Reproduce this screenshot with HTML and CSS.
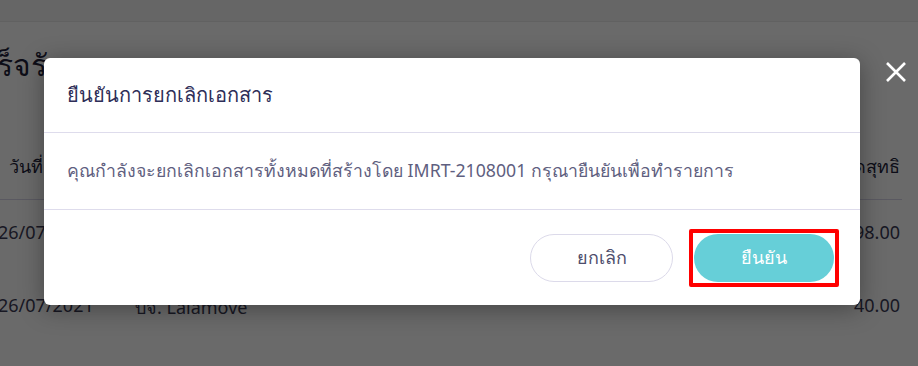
FILE: index.html
```html
<!DOCTYPE html>
<html lang="th">
<head>
<meta charset="utf-8">
<title>ยืนยันการยกเลิกเอกสาร</title>
<link rel="stylesheet" href="styles.css">
</head>
<body>
<div class="page">
  <div class="topbar"></div>
  <div class="content">
    <h1 class="page-title">รายการเสร็จรับ</h1>
    <div class="table">
      <div class="row head">
        <span class="c-date">วันที่</span>
        <span class="c-name">ผู้ขาย</span>
        <span class="c-amt">ยอดสุทธิ</span>
      </div>
      <div class="row">
        <span class="c-date">26/07/2021</span>
        <span class="c-name">บจ. Kerry</span>
        <span class="c-amt">98.00</span>
      </div>
      <div class="row">
        <span class="c-date">26/07/2021</span>
        <span class="c-name">บจ. Lalamove</span>
        <span class="c-amt">40.00</span>
      </div>
    </div>
  </div>
</div>

<div class="overlay">
  <div class="modal">
    <div class="modal-header">ยืนยันการยกเลิกเอกสาร</div>
    <div class="modal-body">คุณกำลังจะยกเลิกเอกสารทั้งหมดที่สร้างโดย IMRT-2108001 กรุณายืนยันเพื่อทำรายการ</div>
    <div class="modal-footer">
      <button class="btn btn-cancel">ยกเลิก</button>
      <span class="highlight"><button class="btn btn-confirm">ยืนยัน</button></span>
    </div>
  </div>
  <button class="close" aria-label="close">
    <svg width="22" height="20" viewBox="0 0 22 20"><path d="M2 1 L20 19 M20 1 L2 19" stroke="#fff" stroke-width="2.6" fill="none"/></svg>
  </button>
</div>
</body>
</html>
```
FILE: styles.css
```css
* { box-sizing: border-box; }
html, body { margin: 0; padding: 0; }
body {
  width: 918px;
  height: 366px;
  overflow: hidden;
  font-family: "Noto Sans", "Liberation Sans", sans-serif;
  background: #fcfcfc;
  position: relative;
}
.page { display: flex; flex-direction: column; }
.topbar { height: 22px; background: #f2f2f2; border-bottom: 1px solid #e6e6e6; }
.content { margin-left: -128px; width: 1030px; }
.page-title {
  margin: 0 0 0 -5px;
  padding-top: 20px;
  height: 108px;
  font-size: 30px;
  font-weight: 400;
  color: #1f1f3a;
}
.table { display: flex; flex-direction: column; }
.row {
  display: flex;
  align-items: flex-start;
  height: 73px;
  padding-top: 20px;
  font-size: 18px;
  color: #3a3a55;
}
.row.head { height: 70px; padding-top: 22px; border-bottom: 1px solid #d6d4e6; color: #1f1f3a; }
.row.head .c-date { padding-left: 137px; }
.c-date { width: 263px; padding-left: 126px; white-space: nowrap; }
.c-name { flex: 1; padding-left: 0; }
.c-amt { width: 200px; text-align: right; padding-right: 2px; }

.overlay {
  position: absolute;
  inset: 0;
  background: rgba(0, 0, 0, 0.58);
  display: flex;
  align-items: flex-start;
  padding: 58px 0 0 44px;
}
.modal {
  width: 816px;
  background: #fff;
  border-radius: 6px;
  box-shadow: 0 4px 24px rgba(0, 0, 0, 0.35);
  display: flex;
  flex-direction: column;
}
.modal-header {
  height: 75px;
  padding: 0 23px;
  display: flex;
  align-items: center;
  font-size: 20px;
  color: #2e2e58;
  border-bottom: 1px solid #dedcec;
}
.modal-body {
  height: 77px;
  padding: 0 23px;
  display: flex;
  align-items: center;
  font-size: 17.7px;
  color: #5f5f7f;
  border-bottom: 1px solid #dedcec;
  white-space: nowrap;
}
.modal-footer {
  height: 95px;
  display: flex;
  justify-content: flex-end;
  align-items: center;
  gap: 16px;
  padding: 0 21px 0 0;
}
.btn {
  font-family: inherit;
  height: 48px;
  border-radius: 24px;
  font-size: 18px;
  cursor: pointer;
}
.btn-cancel {
  width: 143px;
  background: #fff;
  border: 1px solid #dcdaea;
  color: #4e4e6c;
}
.highlight {
  display: flex;
  border: 4px solid #ff0000;
  border-radius: 2px;
  padding: 1px;
}
.btn-confirm {
  width: 140px;
  background: #66cfd8;
  border: none;
  color: #fff;
}
.close {
  position: absolute;
  top: 62px;
  left: 885px;
  background: none;
  border: none;
  padding: 0;
  width: 22px;
  height: 20px;
  display: flex;
}
```
